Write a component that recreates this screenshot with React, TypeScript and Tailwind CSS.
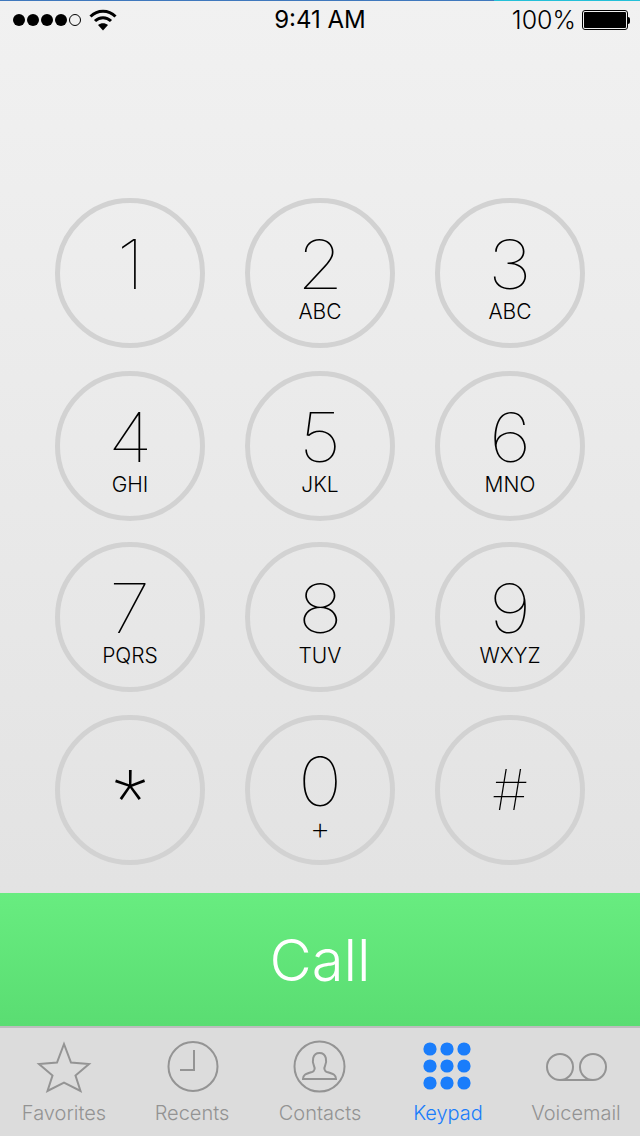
import React from 'react';

const keyRows = [
  {
    className: '',
    keys: [
      { digit: '1', letters: '' },
      { digit: '2', letters: 'ABC' },
      { digit: '3', letters: 'ABC' },
    ],
  },
  {
    className: 'mt-[23px]',
    keys: [
      { digit: '4', letters: 'GHI' },
      { digit: '5', letters: 'JKL' },
      { digit: '6', letters: 'MNO' },
    ],
  },
  {
    className: 'mt-[21px]',
    keys: [
      { digit: '7', letters: 'PQRS' },
      { digit: '8', letters: 'TUV' },
      { digit: '9', letters: 'WXYZ' },
    ],
  },
  {
    className: 'mt-[23px]',
    keys: [
      { digit: '*', letters: '' },
      { digit: '0', letters: '+' },
      { digit: '#', letters: '' },
    ],
  },
];

const WifiIcon = () => (
  <svg width="28" height="22" viewBox="0 0 28 22" fill="none" stroke="#000" strokeWidth="3">
    <path d="M1.5 7.5C8.5 .5 19.5 .5 26.5 7.5" />
    <path d="M6 12C10.5 7.5 17.5 7.5 22 12" />
    <path d="M9 16C12 13.5 16 13.5 19 16L14 21.5Z" fill="#000" stroke="none" />
  </svg>
);

const StatusBar = () => (
  <div className="relative flex h-10 items-center justify-between pl-[13px] pr-[10px] text-black">
    <div className="absolute left-0 right-0 top-0 flex h-[1px]">
      <div className="w-[494px] bg-[#3f78bd]" />
      <div className="flex-1 bg-[#25c0d8]" />
    </div>
    <div className="flex w-[197px] items-center">
      <div className="flex gap-[2px]">
        {[0, 1, 2, 3].map((i) => (
          <div key={i} className="h-[12px] w-[12px] rounded-full bg-black" />
        ))}
        <div className="h-[12px] w-[12px] rounded-full border border-black" />
      </div>
      <div className="ml-[8px]">
        <WifiIcon />
      </div>
    </div>
    <div className="text-[24px] leading-none">9:41 AM</div>
    <div className="flex w-[200px] items-center justify-end">
      <span className="text-[25px] font-light leading-none">100%</span>
      <div className="ml-[6px] flex items-center">
        <div className="h-[20px] w-[46px] rounded-[3px] border border-black p-[1px]">
          <div className="h-full w-full rounded-[1px] bg-black" />
        </div>
        <div className="h-[7px] w-[2px] rounded-r-full bg-black" />
      </div>
    </div>
  </div>
);

const keyRing = 'flex h-[150px] w-[150px] flex-col items-center rounded-full border-[5px] border-[#d2d2d2]';

const DialKey = ({ digit, letters }: { digit: string; letters: string }) => {
  if (digit === '*') {
    return (
      <div className={`${keyRing} justify-center`}>
        <div className="-mt-[20px] h-[40px] font-['Roboto',sans-serif] text-[76px] font-extralight leading-[76px] text-black">*</div>
      </div>
    );
  }
  if (digit === '#') {
    return (
      <div className={`${keyRing} justify-center`}>
        <div className="h-[56px] text-[56px] font-thin leading-[56px] text-black">#</div>
      </div>
    );
  }
  return (
    <div className={`${keyRing} pt-[29px]`}>
      <div className="h-[64px] scale-x-[1.1] text-[68px] font-thin leading-[64px] text-black">{digit}</div>
      {letters === '+' ? (
        <div className="mt-[4px] text-[32px] font-extralight leading-[24px] text-black">+</div>
      ) : (
        letters && <div className="mt-[4px] text-[21px] font-light leading-[24px] text-black">{letters}</div>
      )}
    </div>
  );
};

const TabLabel = ({ text, active }: { text: string; active?: boolean }) => (
  <span
    className={
      active
        ? 'mt-[5px] text-[20px] font-light leading-[24px] text-[#1a7dfb]'
        : 'mt-[5px] text-[20px] font-light leading-[24px] text-[#939393]'
    }
  >
    {text}
  </span>
);

const tabIconProps = { width: 64, height: 56, viewBox: '0 0 64 56', fill: 'none', stroke: '#949494', strokeWidth: 2 };

const FavoritesIcon = () => (
  <svg {...tabIconProps}>
    <path d="M32 4L39 22.5L57 24L43.5 35.5L48.5 51L32 42.5L15.5 51L20.5 35.5L7 24L25 22.5Z" />
  </svg>
);

const RecentsIcon = () => (
  <svg {...tabIconProps}>
    <circle cx="33" cy="26.5" r="24.5" />
    <path d="M34 10V30H20" />
  </svg>
);

const ContactsIcon = () => (
  <svg {...tabIconProps}>
    <circle cx="31.5" cy="26.5" r="25" />
    <path d="M15 39C15 35 17 34 24 32C27 31 27 28 26 26C24 22 24 13 31.5 13C39 13 39 22 37 26C36 28 36 31 39 32C46 34 48 35 48 39Z" />
  </svg>
);

const KeypadIcon = () => (
  <svg {...tabIconProps} fill="#1a7dfb" stroke="none">
    {[9, 26, 43].map((cy) =>
      [14, 31, 48].map((cx) => <circle key={`${cx}-${cy}`} cx={cx} cy={cy} r="6.6" />),
    )}
  </svg>
);

const VoicemailIcon = () => (
  <svg {...tabIconProps}>
    <circle cx="16" cy="27" r="13" />
    <circle cx="49" cy="27" r="13" />
    <path d="M16 40H49" />
  </svg>
);

const tabs = [
  { label: 'Favorites', icon: <FavoritesIcon /> },
  { label: 'Recents', icon: <RecentsIcon /> },
  { label: 'Contacts', icon: <ContactsIcon /> },
  { label: 'Keypad', icon: <KeypadIcon />, active: true },
  { label: 'Voicemail', icon: <VoicemailIcon /> },
];

export default function App() {
  return (
    <div className="flex h-[1136px] w-[640px] flex-col overflow-hidden bg-[linear-gradient(#f1f1f1,#dfdfdf)] font-['Inter',sans-serif]">
      <StatusBar />

      <div className="flex h-[853px] flex-col pt-[158px]">
        {keyRows.map((row) => (
          <div key={row.keys[0].digit} className={`flex justify-center gap-10 ${row.className}`}>
            {row.keys.map((k) => (
              <DialKey key={k.digit} digit={k.digit} letters={k.letters} />
            ))}
          </div>
        ))}
      </div>

      <div className="flex h-[133px] items-center justify-center bg-[linear-gradient(#68ec80,#5add72)] pt-[2px] text-[58px] font-light text-white">
        Call
      </div>

      <div className="flex flex-1 border-t-2 border-[#bdbdbd] bg-[#dcdcdc] pt-[12px]">
        {tabs.map((tab) => (
          <div key={tab.label} className="flex w-[128px] flex-col items-center">
            {tab.icon}
            <TabLabel text={tab.label} active={tab.active} />
          </div>
        ))}
      </div>
    </div>
  );
}
